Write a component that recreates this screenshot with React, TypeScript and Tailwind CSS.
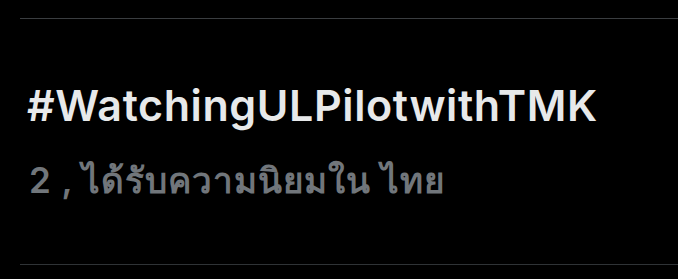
export default function App() {
    return (
        <main className="w-[678px] h-[279px] bg-black flex flex-col overflow-hidden" style={{ fontFamily: 'Inter, "Noto Sans", sans-serif' }}>
            {/* top divider */}
            <div className="mt-[18px] ml-[20px] h-px bg-[#3a3d40]" />

            {/* Trend item */}
            <div className="flex flex-col pl-[27px] pt-[60px]">
                <h2 className="text-[43px] leading-[52px] font-semibold text-[#e7e9ea] tracking-[0.6px]">
                    #WatchingULPilotwithTMK
                </h2>
                <p className="mt-[29px] pl-[2px] text-[35px] leading-[40px] font-semibold text-[#71767b] tracking-[0.9px]">
                    2 , ได้รับความนิยมใน ไทย
                </p>
            </div>

            {/* bottom divider */}
            <div className="mt-auto mb-[14px] ml-[20px] h-px bg-[#2f3336]" />
        </main>
    );
}
